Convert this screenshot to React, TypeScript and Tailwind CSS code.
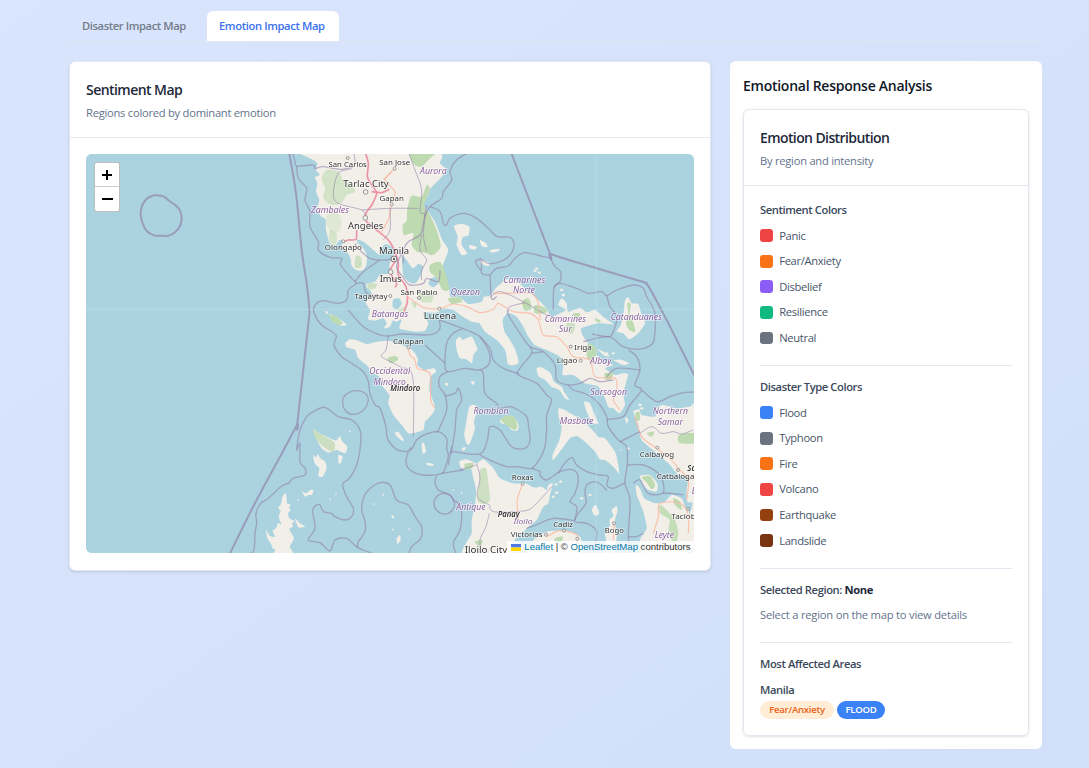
import React from 'react';

type Pt = [number, number];

const parse = (s: string): Pt[] =>
  s.trim().split(/\s+/).map((p) => p.split(',').map(Number) as Pt);

/** Catmull-Rom curve through the points, tightened so that coastlines keep their corners. */
function curve(s: string, closed: boolean, k: number): string {
  const p = parse(s);
  const n = p.length;
  const at = (i: number): Pt => (closed ? p[(i + n) % n] : p[Math.max(0, Math.min(n - 1, i))]);
  let d = `M${p[0][0]} ${p[0][1]}`;
  const last = closed ? n : n - 1;
  for (let i = 0; i < last; i++) {
    const a = at(i - 1), b = at(i), c = at(i + 1), e = at(i + 2);
    d += `C${b[0] + (c[0] - a[0]) * k} ${b[1] + (c[1] - a[1]) * k} ${c[0] - (e[0] - b[0]) * k} ${c[1] - (e[1] - b[1]) * k} ${c[0]} ${c[1]}`;
  }
  return closed ? d + 'Z' : d;
}

const Land = ({ p, fill = '#f2efe9' }: { p: string; fill?: string }) => (
  <path d={curve(p, true, 0.1)} fill={fill} />
);
const Green = ({ p, o = 1 }: { p: string; o?: number }) => (
  <path d={curve(p, true, 0.13)} fill="#bddab1" opacity={o} />
);
const Water = ({ p }: { p: string }) => <Land p={p} fill="#aad3df" />;
const Line = ({ p, w = 4, closed = false }: { p: string; w?: number; closed?: boolean }) => (
  <path d={curve(p, closed, 0.16)} fill="none" stroke="#927fa8" strokeOpacity={w > 5 ? 0.66 : 0.58} strokeWidth={w} strokeLinejoin="round" />
);
const Road = ({ p, main = false }: { p: string; main?: boolean }) => (
  <path d={curve(p, false, 0.14)} fill="none" stroke={main ? '#ec829b' : '#fbb9a2'} strokeWidth={main ? 5 : 3.5} strokeOpacity={0.85} />
);

type Label = [text: string, x: number, y: number, width: number, size: number, kind?: 'region' | 'island'];

const LABELS: Label[] = [
  ['San Carlos', 203, 52, 115, 23],
  ['San Jose', 344, 46, 93, 23],
  ['Aurora', 460, 73, 80, 25, 'region'],
  ['Tarlac City', 258, 112, 136, 27],
  ['Gapan', 335, 154, 73, 24],
  ['Zambales', 150, 190, 114, 25, 'region'],
  ['Angeles', 257, 238, 106, 29],
  ['Olongapo', 190, 301, 111, 24],
  ['Manila', 342, 311, 90, 29],
  ['Imus', 332, 397, 66, 28],
  ['Tagaytay', 273, 446, 99, 23],
  ['San Pablo', 417, 435, 111, 23],
  ['Quezon', 556, 434, 88, 25, 'region'],
  ['Batangas', 330, 501, 109, 25, 'region'],
  ['Lucena', 480, 507, 97, 28],
  ['Calapan', 385, 582, 92, 24],
  ['Occidental', 329, 672, 123, 25, 'region'],
  ['Mindoro', 329, 704, 97, 25, 'region'],
  ['Mindoro', 376, 724, 90, 24, 'island'],
  ['Camarines', 733, 398, 126, 25, 'region'],
  ['Norte', 732, 430, 66, 25, 'region'],
  ['Camarines', 856, 515, 124, 25, 'region'],
  ['Sur', 856, 547, 40, 25, 'region'],
  ['Catanduanes', 1069, 511, 154, 25, 'region'],
  ['Iriga', 909, 600, 53, 24],
  ['Ligao', 861, 640, 62, 24],
  ['Albay', 962, 642, 64, 25, 'region'],
  ['Sorsogon', 986, 734, 110, 25, 'region'],
  ['Romblon', 633, 791, 105, 25, 'region'],
  ['Masbate', 890, 821, 101, 25, 'region'],
  ['Northern', 1171, 791, 106, 25, 'region'],
  ['Samar', 1171, 824, 76, 25, 'region'],
  ['Calbayog', 1131, 922, 103, 24],
  ['Catbalogan', 1194, 987, 128, 24],
  ['Samar', 1257, 962, 70, 24, 'island'],
  ['Eastern', 1275, 1033, 80, 25, 'region'],
  ['Roxas', 728, 991, 65, 24],
  ['Antique', 573, 1080, 88, 25, 'region'],
  ['Panay', 686, 1102, 66, 24, 'island'],
  ['Iloilo', 729, 1122, 57, 24, 'region'],
  ['Cadiz', 849, 1131, 59, 24],
  ['Victorias', 740, 1161, 95, 24],
  ['Bogo', 1003, 1148, 57, 24],
  ['Tacloban', 1225, 1106, 102, 24],
  ['Leyte', 1153, 1163, 58, 25, 'region'],
  ['Iloilo City', 618, 1208, 128, 27],
];

const TOWNS: Pt[] = [
  [203, 24], [344, 56], [257, 126], [335, 163], [256, 204], [190, 274], [332, 366], [331, 438], [417, 444],
  [478, 476], [385, 592], [872, 590], [902, 632], [1132, 893], [1194, 960], [728, 1001], [798, 1154], [852, 1142],
  [1002, 1120], [1224, 1077], [892, 1166],
];

function MapDrawing() {
  return (
    <svg viewBox="86 154 608 399" className="block h-full w-full" aria-label="Map of the Philippines">
      <rect x="86" y="154" width="608" height="399" fill="#aad3df" />
      <g transform="translate(280 150) scale(0.33333)">
        <g style={{ filter: 'blur(1.6px)' }}>
          {/* Luzon */}
          <Land p="75,5 80,20 96,28 112,40 108,60 119,74 105,82 112,100 108,125 118,150 110,180 125,200 137,208 138,240 146,272 150,283 168,285 178,270 190,274 184,290 190,300 203,308 212,325 214,345 228,360 246,362 258,348 261,320 252,298 236,282 230,268 255,278 280,300 300,315 308,290 318,282 335,290 343,305 335,325 328,350 338,365 325,372 300,374 285,395 262,400 260,412 275,428 258,458 270,480 264,508 285,512 310,505 320,520 312,535 330,530 338,512 350,515 365,508 358,535 385,542 410,545 435,542 445,520 435,500 430,488 470,488 490,476 520,480 545,498 575,515 598,520 615,545 650,570 675,600 683,640 694,646 716,638 706,600 690,570 674,545 668,510 684,488 710,500 730,530 745,560 765,585 800,600 840,620 850,645 848,675 880,675 915,700 955,710 975,745 985,772 1000,775 1018,790 1035,765 1030,730 1044,675 1030,670 1005,675 975,655 1000,645 970,635 945,610 930,585 910,560 904,535 955,520 1000,523 975,505 945,480 920,487 900,473 865,485 860,460 845,445 835,465 858,480 830,495 812,502 800,475 775,450 740,420 705,388 680,388 650,412 630,437 612,440 604,456 565,462 540,442 512,440 507,415 498,392 488,350 505,300 487,270 465,215 442,182 430,165 445,135 452,115 478,88 500,60 480,40 465,5" />
          <Green p="140,60 175,65 190,90 215,105 225,125 200,135 185,158 155,165 130,145 135,115 125,85" o={0.6} />
          <Green p="145,180 175,188 185,225 165,255 140,225" o={0.35} />
          <Green p="150,240 170,255 168,283 148,280" o={0.55} />
          <Green p="228,318 243,322 245,350 225,352" o={0.7} />
          <Green p="392,5 468,5 450,25 425,50 405,45 392,25" />
          <Green p="395,138 425,140 440,105 450,120 432,165 450,195 470,240 482,290 458,315 435,308 412,305 395,285 400,250 372,255 368,225 380,212 382,175" />
          <Green p="450,345 475,335 490,350 508,415 488,420 470,385 450,365" />
          <Green p="505,445 540,442 545,455 515,462" />
          <Green p="415,430 460,425 455,455 425,455" o={0.6} />
          <Green p="265,400 290,402 285,415 265,418" o={0.7} />
          <Green p="395,455 410,460 405,475" o={0.7} />
          <Green p="355,480 372,470 380,480 368,500" o={0.5} />
          <Green p="726,455 745,445 755,475 735,482" />
          <Green p="765,465 800,475 798,488 765,490" />
          <Green p="880,490 900,490 895,505 882,503" />
          <Green p="945,505 962,512 958,518 946,513" />
          <Green p="925,580 945,590 950,615 925,630 920,600" />
          <Green p="975,670 1000,670 990,690 975,688" />
          <Green p="860,520 885,522 878,550 860,545" o={0.7} />
          <Water p="366,318 380,330 398,355 415,342 430,350 420,380 405,400 385,395 370,375" />
          <Water p="340,448 358,445 365,462 352,478 338,470" />
          <Water p="452,385 470,382 475,400 460,412 446,402" />
          {/* Islands of the north and centre */}
          <Land p="522,228 545,222 568,230 566,255 548,262 545,285 562,310 545,315 530,285 533,260" />
          <Land p="568,285 590,290 586,298 570,296" />
          <Land p="600,270 618,280 622,292 605,288" />
          <Land p="630,300 658,296 655,304 635,308" />
          <Land p="600,330 628,338 625,348 605,342" />
          <Land p="135,482 145,486 140,492" />
          <Land p="148,492 165,498 190,515 200,525 185,527 158,515" />
          <Green p="148,495 170,500 188,520 175,525 155,512" />
          <Land p="528,570 540,560 548,570 575,560 590,590 592,600 580,615 576,640 558,628 540,625 530,600" />
          <Land p="196,580 210,568 235,572 260,582 290,575 325,572 345,578 385,592 405,610 420,640 430,660 462,655 468,665 452,680 448,720 462,760 464,780 450,800 435,815 430,840 405,848 385,850 365,825 340,795 325,760 328,735 305,705 298,680 270,665 265,650 235,625 225,600 200,592" />
          <Green p="322,625 345,618 355,628 335,640" />
          <Water p="415,630 425,638 440,640 450,655 430,658 412,645" />
          <Land p="345,848 355,845 372,870 366,872 350,858" />
          <Land p="425,880 432,880 438,905 428,910" />
          <Land p="440,938 460,942 458,948 442,946" />
          <Land p="495,698 505,700 503,707 496,705" />
          <Land p="572,695 584,694 580,705" />
          <Land p="568,770 585,765 592,780 582,815 585,835 570,880 560,882 553,855 558,820" />
          <Land p="545,895 556,890 555,900 548,902" />
          <Land p="660,810 680,798 702,800 716,825 712,842 695,840 682,825 665,820" />
          <Green p="662,810 680,798 702,800 712,825 706,840 690,832" />
          <Land p="100,838 118,850 150,865 168,872 180,858 185,872 202,890 195,910 170,900 145,908 125,895 108,865" />
          <Green p="100,838 118,850 150,868 165,880 160,905 130,890 105,862" o={0.75} />
          <Land p="100,915 108,922 114,912 120,924 135,935 140,955 128,980 115,978 118,955 104,940" />
          <Land p="175,915 188,920 182,940 176,938" />
          <Land p="66,1025 80,1030 90,1020 100,1020 96,1034 84,1035 76,1040" />
          <Land p="350,1165 360,1155 362,1170 352,1182" />
          <Land p="334,1096 343,1099 338,1106" />
          {/* Palawan group, cropped by the lower edge */}
          <Land p="8,1040 16,1030 20,1042 21,1060 32,1064 27,1072 32,1080 24,1090 28,1105 45,1115 36,1118 38,1130 28,1138 42,1165 30,1190 40,1215 -20,1215 -14,1200 -22,1195 -28,1180 -38,1165 -42,1140 -30,1158 -15,1160 -22,1142 -12,1135 -5,1118 5,1125 -4,1100 2,1085 -6,1072 2,1065" />
          <Land p="45,1105 60,1120 75,1130 55,1132" />
          {/* Polillo, Marinduque and Catanduanes */}
          <Land p="1035,452 1045,442 1055,460 1075,462 1085,495 1095,520 1075,550 1048,568 1030,550 1010,545 1022,525 1030,495" />
          <Green p="1042,460 1052,462 1050,490 1060,520 1066,545 1048,540 1038,520 1045,495" />
          {/* Burias, Ticao and Masbate */}
          <Land p="770,655 785,652 812,670 822,695 845,710 852,725 868,750 855,745 838,720 815,710 795,690 775,678" />
          <Land p="912,755 930,760 942,790 955,820 940,820 922,790" />
          <Land p="836,775 855,780 880,795 905,808 935,838 955,860 975,865 1005,905 1012,930 1018,970 1000,950 975,930 960,928 945,905 920,880 892,858 870,865 845,898 820,930 818,915 838,870 845,830 836,800" />
          {/* Samar */}
          <Land p="1060,785 1078,778 1085,795 1125,800 1130,775 1150,765 1190,775 1230,770 1260,775 1260,1215 1230,1210 1225,1115 1238,1060 1222,1055 1220,1020 1225,980 1195,975 1165,940 1125,905 1085,870 1075,825" />
          <Green p="1066,790 1078,785 1080,810 1068,810" />
          <Green p="1195,858 1215,850 1250,852 1250,878 1200,880" />
          <Green p="1100,850 1122,845 1115,860" />
          <Land p="1035,802 1045,808 1040,822" />
          <Land p="1080,978 1110,975 1132,1000 1130,1025 1105,1020 1090,1005" />
          <Green p="1085,982 1110,978 1125,1005 1115,1018 1100,998" />
          {/* Leyte */}
          <Land p="1068,1005 1080,1015 1092,1045 1112,1055 1130,1060 1155,1055 1175,1035 1205,1045 1215,1070 1228,1090 1232,1215 1090,1215 1080,1170 1100,1135 1090,1085 1070,1035" />
          <Green p="1140,1065 1160,1080 1185,1110 1195,1150 1185,1185 1165,1150 1168,1110 1140,1090" o={0.85} />
          <Green p="1180,1045 1200,1055 1205,1080 1185,1065" />
          {/* Panay */}
          <Land p="538,935 560,928 590,940 610,928 640,955 660,985 700,1000 735,1000 760,1012 785,1010 800,1020 805,1005 818,1000 810,1035 805,1060 790,1070 782,1085 770,1110 745,1130 725,1150 700,1175 690,1215 550,1215 558,1180 575,1150 575,1110 585,1065 588,1020 580,985 572,955 545,955" />
          <Green p="555,942 580,940 575,955 556,958" />
          <Green p="600,960 618,955 625,1000 630,1050 610,1062 592,1050 598,1000" o={0.7} />
          <Green p="585,1175 608,1170 600,1190" />
          {/* Negros and northern Cebu */}
          <Land p="745,1215 760,1170 800,1145 830,1142 870,1145 900,1160 905,1180 895,1215" />
          <Green p="825,1165 848,1160 845,1175 828,1178" />
          <Land p="975,1215 978,1170 975,1150 990,1125 988,1110 1000,1098 995,1080 1010,1068 1012,1085 1005,1110 1010,1160 1002,1215" />
          <Land p="940,1070 948,1065 958,1090 945,1098 936,1082" />
          {/* Small islets */}
          <g fill="#f2efe9">
            {parse('770,356 778,368 765,362 828,1003 842,995 830,1028 820,1040 1045,895 845,420 850,435 905,1045 930,1035 1080,765 1085,775 1000,610 1020,632 1035,640 980,610').map(([x, y], i) => (
              <ellipse key={i} cx={x} cy={y} rx={5} ry={3.5} />
            ))}
            {parse('310,1034 281,1062 150,1048 168,1032 210,844 54,1050 1022,900 338,1139 388,1137 545,1028 520,1020').map(([x, y], i) => (
              <circle key={i} cx={x} cy={y} r={2.6} />
            ))}
          </g>
          <Land p="952,598 970,605 990,618 975,618" />
          <Land p="1000,630 1025,630 1048,640 1030,645" />

          {/* Roads */}
          <Road main p="255,5 265,40 262,80 275,105 290,130 275,165 258,190 260,215 290,240 325,270 345,305 355,340 355,375 378,410 382,455 372,485" />
          <Road main p="275,125 305,128 328,118" />
          <Road main p="230,240 228,268 205,270 192,276" />
          <Road main p="345,335 330,365 350,400 345,412" />
          <Road p="340,60 315,90 345,125 335,160 325,210 300,250" />
          <Road p="335,65 325,75 310,90" />
          <Road p="382,440 410,460 430,472 478,476 520,462 560,470 600,488 640,478 655,460 700,485 750,490 775,510 790,555 830,560 860,590 880,620 930,630 945,680 1005,685 1010,720 1000,750 1020,780" />
          <Road p="640,430 690,430 755,430 775,460 780,510" />
          <Road p="385,590 390,615 405,630 412,655 450,672 452,750 465,775" />
          <Road p="1065,800 1085,860 1130,895 1170,925 1195,955 1225,990 1220,1050" />
          <Road p="728,1000 712,1050 715,1110" />
          <Road p="800,1160 840,1142 892,1155 885,1190" />
          <Road p="1120,1150 1135,1100 1140,1060 1200,1060 1225,1095 1225,1150" />
          <Road p="1003,1120 1000,1170" />

          {/* Provincial boundaries on land */}
          <Line w={3} p="220,5 225,35 215,55 175,70 160,130 175,160 245,180 255,200" />
          <Line w={3} p="385,5 405,60 425,120 420,185 435,195 430,255 440,305" />
          <Line w={3} p="245,180 330,175 415,175" />
          <Line w={3} p="330,175 330,240 310,270" />
          <Line p="440,165 430,220 420,255 385,275 370,300 370,340" />
          <Line w={3} p="325,555 318,600 305,620 360,650 398,680 400,860" />
          <Line w={3} p="630,442 662,425 735,458 790,490 818,500" />
          <Line w={3} p="735,458 690,470 684,485" />
          <Line w={3} p="590,940 600,985 592,1040 628,1065" />
          <Line w={3} p="628,1065 640,1085 700,1085 745,1080 770,1060 815,1010" />
          <Line w={3} p="540,960 590,945" />
          <Line w={3} p="628,1090 618,1130 600,1170 605,1210" />
          <Line w={3} p="1080,850 1115,830 1145,850 1180,845 1205,852 1240,840" />
          <Line w={3} p="425,255 420,300 440,330 425,360 425,390" />

          {/* Territorial limit */}
          <Line w={6} p="22,-10 28,12 48,130 65,300 80,400 88,480 84,530 52,820 51,825 0,920 -78,1065 -155,1220" />
          <Line w={6} p="690,0 695,12 808,306 812,312 900,340 1080,393 1100,402 1115,425 1165,520 1205,600 1250,690" />
          <Line w={6} closed p="-370,136 -382,137 -398,145 -413,165 -418,190 -413,218 -400,243 -378,256 -358,257 -335,257 -315,247 -300,228 -295,205 -300,182 -312,167 -337,149 -350,139" />

          {/* Municipal waters */}
          <Line p="38,5 45,35 50,48 100,45 105,55 130,50 180,58 220,50" />
          <Line p="50,48 55,85 80,115 75,150 90,185 90,230 115,275 115,300 150,322 185,325 182,345 215,385 228,400 205,420 200,450 170,460 130,452 105,465 102,488 125,525 168,555 162,585 185,620 215,640 250,665 265,695 270,730 285,765 300,775 318,830 322,865 345,895 375,905 395,898 410,870 440,852 475,845 500,865 500,895 505,915 500,940 485,970 430,975 390,960 378,935 385,905 395,892" />
          <Line p="228,400 250,400 260,430 305,438" />
          <Line p="205,480 250,530 300,555 325,558 370,552 435,555 465,550 480,535 478,510" />
          <Line p="478,510 520,525 560,540 600,560 625,600 630,620 625,645 595,660 555,655 505,665 495,645 500,580 520,550 550,535" />
          <Line p="435,585 495,640" />
          <Line p="505,665 480,680 478,710 495,735 500,780 480,830 472,848" />
          <Line p="495,738 525,730 535,715 545,750 530,780 525,840 515,905 520,905 600,912 622,870 630,830 660,840 695,890 735,895 750,870 745,825 740,800 715,780 690,770 660,775 650,760 615,730 610,670 600,660" />
          <Line p="505,945 515,890" />
          <Line p="228,280 230,290 270,325 320,330 345,320" />
          <Line p="300,330 250,365 225,395" />
          <Line p="370,300 350,350 368,380 390,405 430,400 440,385 475,395 480,360" />
          <Line p="570,5 530,30 510,65 515,90 490,125 485,145 450,170 435,200" />
          <Line p="450,170 480,185 490,220 500,225 510,205 550,190 590,205 625,235 652,260 690,262 702,285 690,315 660,335 625,340 600,325" />
          <Line p="630,375 605,370 605,340 600,330 590,330 588,340 605,365" />
          <Line p="630,375 635,445 650,440" />
          <Line p="630,375 650,355 685,348 705,325 735,308 790,320 810,325 825,350 842,365 840,395 822,412 820,480" />
          <Line p="822,412 840,400 890,415 925,430 965,425 980,437 1010,420 1060,405 1090,415 1100,440 1125,490 1122,570 1105,590 1075,598 1030,590 985,560 910,575" />
          <Line p="980,437 990,470 1010,500 1000,545 985,560 935,552" />
          <Line p="684,480 685,495 720,550 750,590 790,605 825,645 830,690 865,705 900,700 930,685 960,695 1000,690" />
          <Line p="750,590 755,610 720,655 715,675 770,700 800,735 815,750 800,795 800,835 795,890 780,925 755,955 715,950 680,950 640,935 600,915" />
          <Line p="755,610 790,605" />
          <Line p="600,560 630,595 640,630 670,655 718,672" />
          <Line p="865,705 880,720 925,735 960,765 980,800 985,830 1015,870 1040,890 1042,940 1035,1000 1050,1050 1045,1160 1050,1210" />
          <Line p="980,808 1030,800 1050,765 1085,720 1065,705 1080,660 1070,620 1045,600" />
          <Line p="1085,720 1130,755 1170,740 1210,728 1260,725" />
          <Line p="1080,660 1010,655 980,680" />
          <Line p="1020,875 1080,845" />
          <Line p="1042,945 1090,945 1135,970 1150,1000 1148,1030 1105,1030 1080,990 1060,1000" />
          <Line p="755,955 780,965 780,975 800,990 840,965 880,960 895,985 885,1030 870,1055 890,1070 885,1110" />
          <Line p="835,970 850,945 875,922 890,945 920,965 960,975 985,980 980,1005 1000,1015 1035,998" />
          <Line p="980,1022 965,1005 945,995 920,1005 915,1030 918,1060 895,1090 885,1115 920,1120 950,1145 940,1205" />
          <Line p="740,1135 780,1120 820,1105 885,1112" />
          <Line p="1148,1030 1175,1030 1210,1035" />
          <Line p="1045,1160 1070,1160 1090,1150" />
          {/* West of Mindoro and Cuyo */}
          <Line closed p="188,760 192,740 210,726 235,722 258,732 265,750 255,775 235,790 210,792 195,780" />
          <Line p="-92,1215 -78,1200 -75,1150 -70,1120 -72,1090 -58,1060 -35,1045 5,1008 25,1000 40,985 75,975 75,955 60,935 60,880 50,900 60,840 80,800 100,785 135,772 175,800 215,810 240,840 242,880 230,945 208,985 188,1003 200,1040 220,1075 215,1100 195,1110 165,1100 155,1090 130,1085 118,1063 98,1080 105,1135 85,1170 120,1178 150,1203 165,1170 200,1165 230,1190 235,1175 255,1145 255,1115 245,1080 250,1045 265,1020 300,998 330,1005 350,1050 385,1065 405,1100 425,1130 422,1165 395,1190 385,1215" />
          <Line p="230,1190 250,1200 275,1210" />
          <Line p="470,978 465,995 475,1020 510,1035 520,1050 535,1060 545,1090 540,1140 520,1180 530,1215" />
          <Line closed p="462,1060 472,1038 495,1030 512,1038 524,1060 515,1083 495,1092 472,1083" />
          <Line p="485,970 550,960" />
        </g>

        <path d="M-600 478H1260M949 0V1215" stroke="#d5ecf3" strokeOpacity={0.32} strokeWidth={3} />

        <g style={{ filter: 'blur(1.1px)' }}>
          {TOWNS.map(([x, y], i) => (
            <circle key={i} cx={x} cy={y} r={i === 2 || i === 4 || i === 6 ? 7 : 4.5} fill="#f5f2ed" stroke="#858585" strokeWidth={2.5} />
          ))}
          <circle cx={342} cy={327} r={9} fill="#eee" stroke="#777" strokeWidth={3} />
          <circle cx={342} cy={327} r={3.5} fill="#666" />

          {LABELS.map(([text, x, y, width, size, kind], i) => (
            <text
              key={i}
              x={x - width / 2}
              y={y}
              textLength={width}
              lengthAdjust="spacingAndGlyphs"
              fontFamily="'Noto Sans', sans-serif"
              fontSize={size}
              fontStyle={kind ? 'italic' : 'normal'}
              fontWeight={kind === 'island' ? 600 : 400}
              fill={kind === 'region' ? '#8a5f9f' : '#333333'}
              stroke="#ffffff"
              strokeOpacity={0.6}
              strokeWidth={5}
              strokeLinejoin="round"
              paintOrder="stroke"
            >
              {text}
            </text>
          ))}
        </g>
      </g>
    </svg>
  );
}

function SentimentMap() {
  return (
    <div className="relative h-[399px] overflow-hidden rounded-md bg-[#aad3df]">
      <MapDrawing />
      <div className="absolute left-2 top-2 flex w-[26px] flex-col overflow-hidden rounded-[3px] border border-black/25 bg-white text-black">
        <button className="flex h-6 items-center justify-center border-b border-[#ccc]" aria-label="Zoom in">
          <svg width="12" height="12" viewBox="0 0 12 12"><path d="M1 6h10M6 1v10" stroke="#000" strokeWidth="2" /></svg>
        </button>
        <button className="flex h-6 items-center justify-center" aria-label="Zoom out">
          <svg width="12" height="12" viewBox="0 0 12 12"><path d="M1 6h11" stroke="#000" strokeWidth="2" /></svg>
        </button>
      </div>
      <div className="absolute bottom-0 right-0 flex h-3 items-center whitespace-pre bg-white/80 pl-1 pr-[3.5px] font-['Liberation_Sans',Arial,sans-serif] text-[9.6px] leading-3 tracking-[-0.02px] text-[#333]">
        <svg width="10" height="7" viewBox="0 0 10 7" className="mr-[3px]">
          <path fill="#4c7be1" d="M0 0h10v3.5H0z" />
          <path fill="#ffd500" d="M0 3.5h10V7H0z" />
        </svg>
        <a className="text-[#0078a8]">Leaflet</a> | © <a className="text-[#0078a8]">OpenStreetMap</a> contributors
      </div>
    </div>
  );
}

const SENTIMENTS = [
  { name: 'Panic', color: 'bg-[#ef4444]' },
  { name: 'Fear/Anxiety', color: 'bg-[#f97316]' },
  { name: 'Disbelief', color: 'bg-[#8b5cf6]' },
  { name: 'Resilience', color: 'bg-[#10b981]' },
  { name: 'Neutral', color: 'bg-[#6b7280]' },
];

const DISASTERS = [
  { name: 'Flood', color: 'bg-[#3b82f6]' },
  { name: 'Typhoon', color: 'bg-[#6b7280]' },
  { name: 'Fire', color: 'bg-[#f97316]' },
  { name: 'Volcano', color: 'bg-[#ef4444]' },
  { name: 'Earthquake', color: 'bg-[#92400e]' },
  { name: 'Landslide', color: 'bg-[#78350f]' },
];

const Heading = ({ children }: { children: React.ReactNode }) => (
  <h4 className="h-4 text-[11.2px] font-semibold leading-4 tracking-[-0.4px] text-[#3b485b]">{children}</h4>
);

function Legend({ title, items }: { title: string; items: { name: string; color: string }[] }) {
  return (
    <section className="flex flex-col gap-[9.6px]">
      <Heading>{title}</Heading>
      {items.map((it) => (
        <div key={it.name} className="flex h-4 items-center gap-[6.4px]">
          <span className={`size-[12.8px] rounded-[3.2px] ${it.color}`} />
          <span className="text-[11.2px] leading-4 tracking-[-0.32px] text-[#475569]">{it.name}</span>
        </div>
      ))}
    </section>
  );
}

const Divider = () => <div className="mb-[12.8px] mt-[19.2px] h-px bg-[#e2e8f0]" />;

export default function App() {
  return (
    <div className="h-[768px] overflow-hidden bg-linear-to-br from-[#d9e5fc] to-[#d1dff8] pl-[69px] pr-[47px] pt-[11px] font-['Open_Sans','Noto_Sans',sans-serif]">
      <nav className="flex h-[31px] items-start border-b border-[#dfe5f2] text-[11.2px] font-semibold leading-[28px]">
        <button className="mr-[7px] h-[30px] w-[131px] pl-[13px] text-left tracking-[-0.4px] text-[#747c8b]">Disaster Impact Map</button>
        <button className="h-[30px] w-[132px] rounded-t-md bg-white pl-[12px] text-left tracking-[-0.37px] text-[#3b71ee]">Emotion Impact Map</button>
      </nav>

      <main className="mt-[19px] flex items-start gap-[19px]">
        <div className="h-[510px] w-[642px] rounded-md border border-[#e2e8f0] bg-white shadow-sm">
          <header className="h-[76px] border-b border-[#e2e8f0] px-4 pt-[17px]">
            <h3 className="text-[14px] font-semibold leading-[22px] tracking-[-0.55px] text-[#1e293b]">Sentiment Map</h3>
            <p className="mt-[4px] text-[11.2px] leading-4 tracking-[-0.26px] text-[#64748b]">Regions colored by dominant emotion</p>
          </header>
          <div className="p-4">
            <SentimentMap />
          </div>
        </div>

        <aside className="h-[688px] w-[312px] rounded-md bg-white px-[13px] pt-[14px]">
          <h2 className="text-[14px] font-semibold leading-[22px] tracking-[-0.26px] text-[#111827]">Emotional Response Analysis</h2>
          <div className="mt-3 h-[627px] rounded-md border border-[#e2e8f0] shadow-sm">
            <header className="h-[76px] border-b border-[#e2e8f0] px-4 pt-[17px]">
              <h3 className="text-[14px] font-semibold leading-[22px] tracking-[-0.6px] text-[#1e293b]">Emotion Distribution</h3>
              <p className="mt-[4px] text-[11.2px] leading-4 tracking-[-0.26px] text-[#64748b]">By region and intensity</p>
            </header>
            <div className="px-4 pt-4">
              <Legend title="Sentiment Colors" items={SENTIMENTS} />
              <Divider />
              <Legend title="Disaster Type Colors" items={DISASTERS} />
              <Divider />
              <Heading>Selected Region: <b className="font-bold text-[#1e293b]">None</b></Heading>
              <p className="mt-[9.6px] text-[11.2px] leading-4 tracking-[-0.22px] text-[#64748b]">Select a region on the map to view details</p>
              <Divider />
              <Heading>Most Affected Areas</Heading>
              <div className="mt-[9.6px]">
                <Heading>Manila</Heading>
                <div className="mt-[3px] flex gap-[3px] text-[9.6px] font-semibold leading-[18px]">
                  <span className="h-[18px] w-[74px] rounded-full bg-[#ffedd5] text-center tracking-[-0.27px] text-[#ea6320]">Fear/Anxiety</span>
                  <span className="h-[18px] w-12 rounded-full bg-[#3b82f6] text-center tracking-[-0.25px] text-white">FLOOD</span>
                </div>
              </div>
            </div>
          </div>
        </aside>
      </main>
    </div>
  );
}
